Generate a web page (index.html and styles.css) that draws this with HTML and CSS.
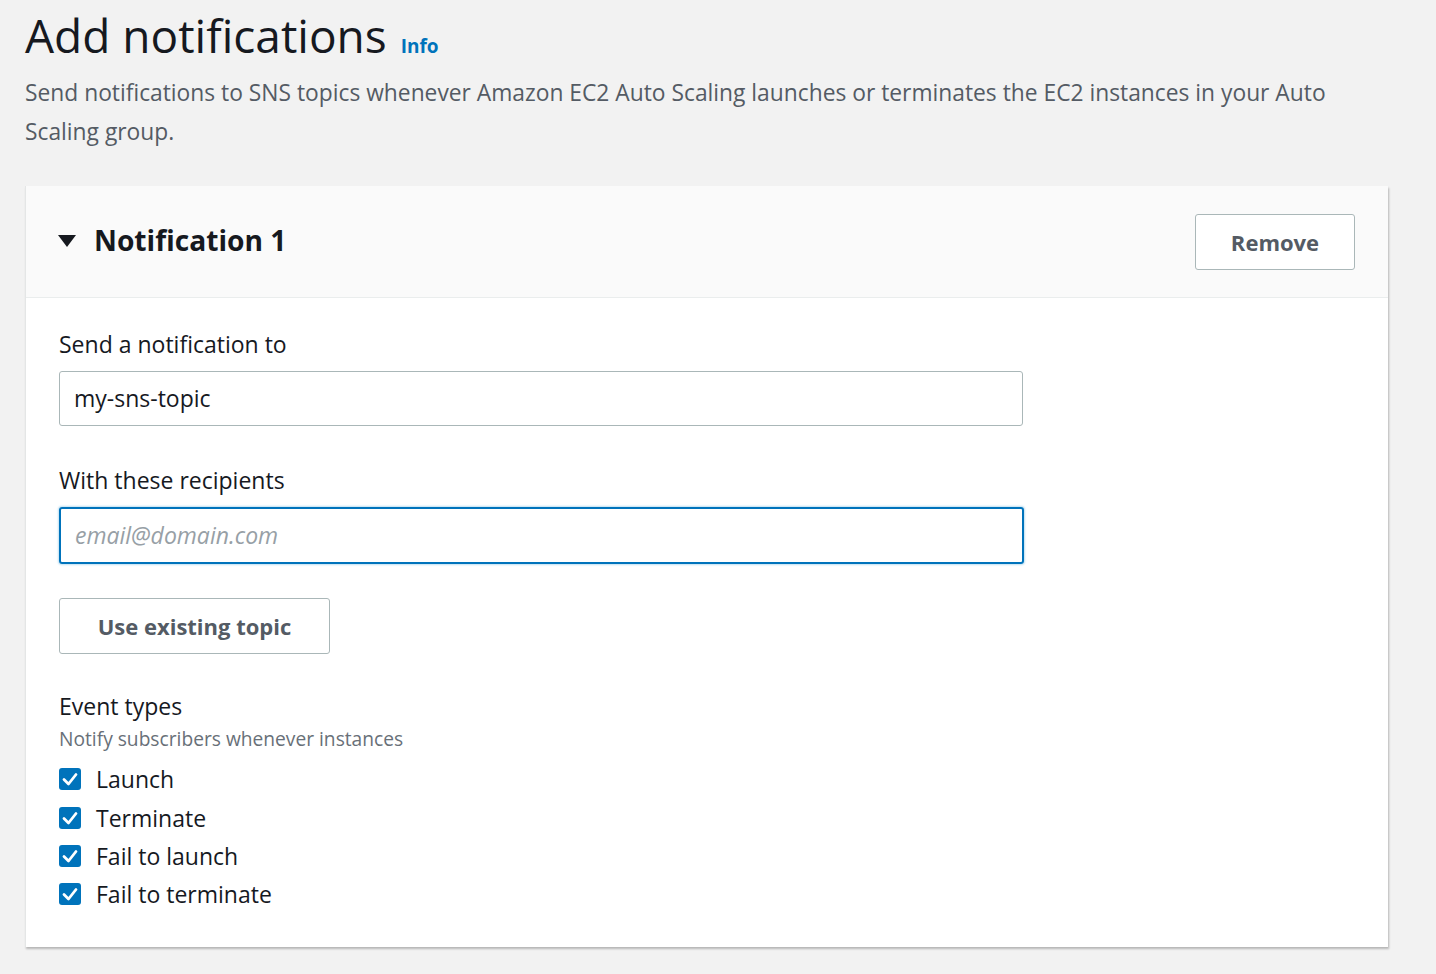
FILE: index.html
```html
<!DOCTYPE html>
<html>
<head>
<meta charset="utf-8">
<link rel="stylesheet" href="styles.css">
</head>
<body>
<div class="page">
  <header class="page-head">
    <h1 class="title">Add notifications <a class="info">Info</a></h1>
    <p class="desc">Send notifications to SNS topics whenever Amazon EC2 Auto Scaling launches or terminates the EC2 instances in your Auto Scaling group.</p>
  </header>
  <section class="card">
    <div class="card-head">
      <div class="card-title">
        <svg class="caret" width="18" height="14" viewBox="0 0 18 14"><polygon points="0,1 18,1 9,13" fill="#16191f"/></svg>
        <h2>Notification 1</h2>
      </div>
      <button class="btn btn-remove">Remove</button>
    </div>
    <div class="card-body">
      <div class="field">
        <label class="label">Send a notification to</label>
        <div class="input">my-sns-topic</div>
      </div>
      <div class="field">
        <label class="label">With these recipients</label>
        <div class="input input-focus"><span class="placeholder">email@domain.com</span></div>
      </div>
      <button class="btn btn-topic">Use existing topic</button>
      <div class="events">
        <div class="label">Event types</div>
        <div class="hint">Notify subscribers whenever instances</div>
        <ul class="checks">
          <li><span class="box"><svg width="22" height="22" viewBox="0 0 22 22"><path d="M5 11.5 L9.5 16 L17 6.5" fill="none" stroke="#fff" stroke-width="2.8" stroke-linecap="round" stroke-linejoin="round"/></svg></span>Launch</li>
          <li><span class="box"><svg width="22" height="22" viewBox="0 0 22 22"><path d="M5 11.5 L9.5 16 L17 6.5" fill="none" stroke="#fff" stroke-width="2.8" stroke-linecap="round" stroke-linejoin="round"/></svg></span>Terminate</li>
          <li><span class="box"><svg width="22" height="22" viewBox="0 0 22 22"><path d="M5 11.5 L9.5 16 L17 6.5" fill="none" stroke="#fff" stroke-width="2.8" stroke-linecap="round" stroke-linejoin="round"/></svg></span>Fail to launch</li>
          <li><span class="box"><svg width="22" height="22" viewBox="0 0 22 22"><path d="M5 11.5 L9.5 16 L17 6.5" fill="none" stroke="#fff" stroke-width="2.8" stroke-linecap="round" stroke-linejoin="round"/></svg></span>Fail to terminate</li>
        </ul>
      </div>
    </div>
  </section>
</div>
</body>
</html>
```

FILE: styles.css
```css
* { box-sizing: border-box; }
html, body { margin: 0; padding: 0; }
body {
  background: #f2f2f2;
  font-family: "Open Sans", "Noto Sans", sans-serif;
  color: #16191f;
  width: 1436px;
  height: 974px;
  overflow: hidden;
}
.page { padding: 0 48px 0 25px; }
.page-head { padding-top: 7px; }
.title {
  margin: 0;
  font-size: 46px;
  font-weight: 400;
  line-height: 56px;
  color: #16191f;
  display: flex;
  align-items: baseline;
  gap: 14px;
}
.info {
  font-size: 19px;
  font-weight: 700;
  color: #0073bb;
}
.desc {
  margin: -1px 0 0;
  font-size: 22.8px;
  line-height: 39px;
  color: #545b64;
  max-width: 1320px;
}
.card {
  margin-top: 35px;
  width: 1363px;
  background: #fff;
  border-left: 1px solid #e4e6e6;
  box-shadow: 1px 2px 2px 0 rgba(0,0,0,0.25);
}
.card-head {
  background: #fafafa;
  height: 112px;
  border-bottom: 1px solid #eaeded;
  display: flex;
  align-items: center;
  justify-content: space-between;
  padding: 0 33px 0 32px;
}
.card-title { display: flex; align-items: center; gap: 18px; margin-top: -4px; }
.caret { display: block; margin-top: 2px; }
.card-title h2 {
  margin: 0;
  font-size: 28.2px;
  font-weight: 700;
  line-height: 40px;
}
.btn {
  background: #fff;
  border: 1px solid #aab7b8;
  border-radius: 3px;
  font-family: inherit;
  font-weight: 700;
  font-size: 22px;
  color: #545b64;
  height: 56px;
}
.btn-remove { width: 160px; margin-top: 1px; }
.card-body { padding: 30px 33px 33px; }
.field { margin-bottom: 38px; }
.label {
  display: block;
  font-size: 23px;
  line-height: 32px;
  color: #16191f;
  margin-bottom: 11px;
}
.input {
  width: 964px;
  height: 55px;
  border: 1px solid #aab7b8;
  border-radius: 3px;
  font-size: 23px;
  line-height: 53px;
  padding: 0 14px;
  color: #16191f;
}
.input-focus {
  width: 965px;
  height: 57px;
  border: 2px solid #0073bb;
  box-shadow: 0 0 2px 1px #bfe0f2;
  line-height: 53px;
}
.placeholder { font-style: italic; color: #979fa6; }
.btn-topic { width: 271px; margin-top: -4px; display: block; }
.events { margin-top: 36px; }
.events .label { margin-bottom: 0; }
.hint {
  font-size: 19.2px;
  line-height: 32px;
  color: #687078;
  margin-top: 1px;
}
.checks { list-style: none; margin: 5px 0 0; padding: 0; }
.checks li {
  display: flex;
  align-items: center;
  font-size: 23px;
  line-height: 38px;
  height: 38.4px;
}
.box {
  width: 22px;
  height: 22px;
  background: #0073bb;
  border-radius: 3px;
  margin-right: 15px;
  display: block;
}
.box svg { display: block; }
```
